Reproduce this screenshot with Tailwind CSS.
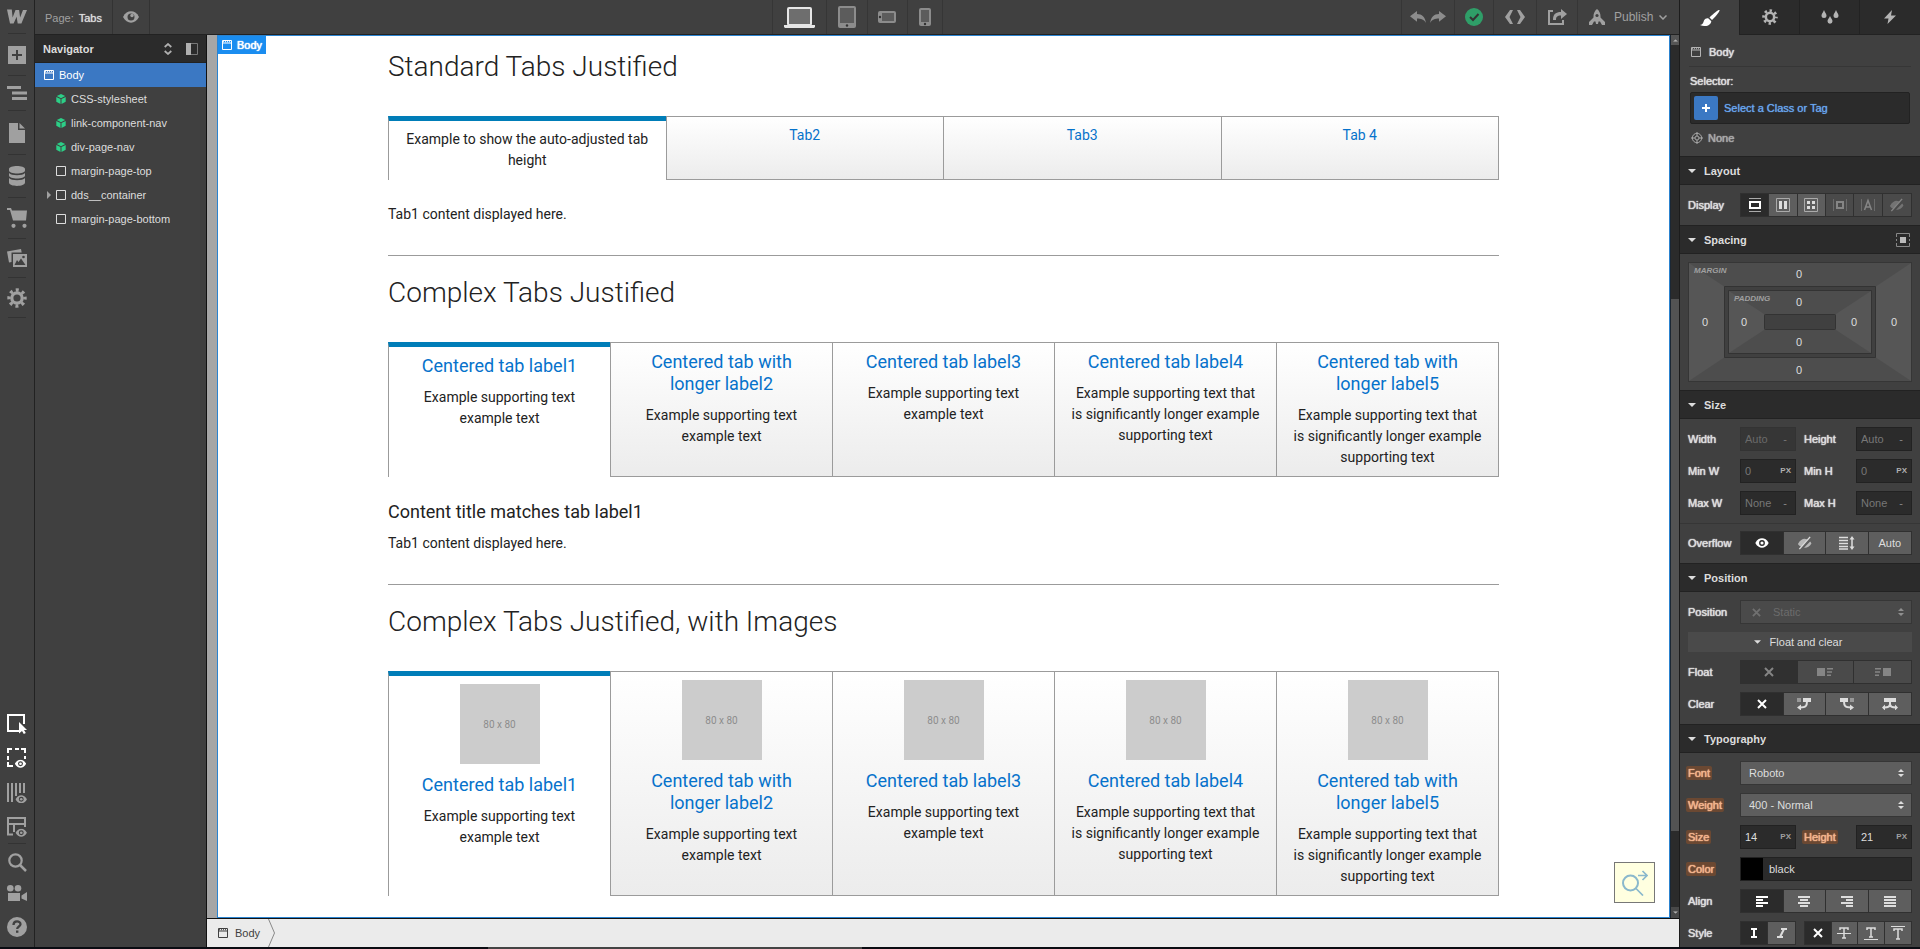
<!DOCTYPE html>
<html lang="en">
<head>
<meta charset="utf-8">
<title>Page: Tabs</title>
<script src="https://cdn.jsdelivr.net/npm/@tailwindcss/browser@4"></script>
</head>
<body class="h-screen overflow-hidden flex flex-col bg-[#404040] font-['Liberation_Sans',Arial,sans-serif] text-[11px] leading-4 text-[#dddddd]">

<svg class="hidden" aria-hidden="true">
  <symbol id="win" viewBox="0 0 10 10"><path d="M.5 .5h9v9h-9zM.5 3h9" fill="none" stroke="currentColor"/><path d="M1 1.7h8" stroke="currentColor" stroke-dasharray="1 1"/></symbol>
  <symbol id="cube" viewBox="0 0 10 10"><path d="M5 0l4.2 2.1L5 4.2.8 2.1zM.3 3l4.2 2.1V10L.3 7.7zM9.7 3L5.5 5.1V10l4.2-2.3z" fill="currentColor"/></symbol>
  <symbol id="box" viewBox="0 0 10 10"><path d="M.5 .5h9v9h-9z" fill="none" stroke="currentColor"/></symbol>
  <symbol id="gear" viewBox="0 0 20 20"><g fill="none" stroke="currentColor"><circle cx="10" cy="10" r="5.200" stroke-width="3.200"/><circle cx="10" cy="10" r="8" stroke-width="3.400" stroke-dasharray="3 3.283" stroke-dashoffset="1.500"/></g></symbol>
  <symbol id="eye" viewBox="0 0 16 12"><path d="M0 6C2 2 5 .3 8 .3S14 2 16 6c-2 4-5 5.700-8 5.700S2 10 0 6zm8-3.500a3.500 3.500 0 100 7 3.500 3.500 0 000-7z" fill="currentColor" fill-rule="evenodd"/><circle cx="8" cy="6" r="1.900" fill="currentColor"/></symbol>
  <symbol id="eyeoff" viewBox="0 0 16 14"><path d="M1 8C3 4 6 2.500 8 2.500c1 0 2 .2 3 .8L4.500 11C3 10.200 2 9.500 1 8zM14 5.500c.5.500 1 1.200 1.400 2C13.500 11 11 12 8.500 12h-1z" fill="currentColor" opacity=".7"/><path d="M14 .5L2.500 13.500" stroke="currentColor" stroke-width="1.500"/></symbol>
  <symbol id="x" viewBox="0 0 10 10"><path d="M1 1l8 8M9 1L1 9" stroke="currentColor" stroke-width="2"/></symbol>
  <symbol id="tri" viewBox="0 0 8 4"><path d="M0 0h8L4 4z" fill="currentColor"/></symbol>
  <symbol id="updown" viewBox="0 0 6 8"><path d="M0 3L3 0l3 3zM0 5l3 3 3-3z" fill="currentColor"/></symbol>
</svg>

<div class="flex flex-1 min-h-0">
  <div class="flex flex-col flex-1 min-w-0">
    <div class="flex flex-1 min-h-0">

      <!-- Tool rail -->
      <aside class="w-[35px] shrink-0 border-r border-[#222222] flex flex-col items-center text-[#a0a0a0]" aria-label="Tools">
        <button class="h-[34px] w-[18px] border-b border-[#333333] flex items-center justify-center" aria-label="Home"><svg class="w-5 h-[15px] shrink-0" viewBox="0 0 20 15"><path d="M0 .5h4.800l.8 8L8.500 1h3.600l1 7.500L16 1h4l-5.600 13.500h-3.700L9.600 7.800l-3 6.700H3z" fill="currentColor"/></svg></button>
        <button class="h-[42px] w-[18px] border-b border-[#333333] flex items-center justify-center" aria-label="Add element"><svg class="w-[18px] h-[18px]" viewBox="0 0 18 18"><path d="M0 0h18v18H0z" fill="currentColor"/><path d="M9 4v10M4 9h10" stroke="#404040" stroke-width="2"/></svg></button>
        <button class="h-[35px] w-[18px] border-b border-[#333333] flex items-center justify-center" aria-label="Navigator"><svg class="w-5 h-[14px] shrink-0" viewBox="0 0 20 14"><path d="M0 1.500h14M5 7h15M5 12.500h15" stroke="currentColor" stroke-width="3"/></svg></button>
        <button class="h-[44px] w-[18px] border-b border-[#333333] flex items-center justify-center" aria-label="Pages"><svg class="w-4 h-5" viewBox="0 0 16 20"><path d="M0 0h9v7h7v13H0zM10.500 0L16 5.500h-5.500z" fill="currentColor"/></svg></button>
        <button class="h-[43px] w-[18px] border-b border-[#333333] flex items-center justify-center" aria-label="CMS"><svg class="w-4 h-5" viewBox="0 0 16 20"><path d="M0 3c0-4 16-4 16 0v1.500c0 4-16 4-16 0zM0 7c2 3 14 3 16 0v2.500c0 4-16 4-16 0zM0 12c2 3 14 3 16 0v4.500c0 4.500-16 4.500-16 0z" fill="currentColor"/></svg></button>
        <button class="h-[41px] w-[18px] border-b border-[#333333] flex items-center justify-center" aria-label="Ecommerce"><svg class="w-5 h-5 shrink-0" viewBox="0 0 20 20"><path d="M0 0h4l1 2.500h15l-1 10H6L3 2H0zM5 13.500h14" fill="currentColor"/><circle cx="6.500" cy="17.800" r="2.100" fill="currentColor"/><circle cx="17.500" cy="17.800" r="2.100" fill="currentColor"/></svg></button>
        <button class="h-[39px] w-[18px] border-b border-[#333333] flex items-center justify-center" aria-label="Assets"><svg class="w-5 h-[18px] shrink-0" viewBox="0 0 20 18"><path d="M0 2.500L14 0l.7 3.500H4.500V13L2 13.500z" fill="currentColor"/><path d="M6 5h14v13H6zm1.500 11h11L14 9.500 11.500 13 10 11z" fill="currentColor" fill-rule="evenodd"/><circle cx="16.500" cy="8" r="1.300" fill="#404040"/></svg></button>
        <button class="h-[40px] w-[18px] border-b border-[#333333] flex items-center justify-center" aria-label="Settings"><svg class="w-5 h-5 shrink-0"><use href="#gear"/></svg></button>
        <div class="flex-1"></div>
        <button class="h-[34px] flex items-center text-white" aria-label="Select"><svg class="w-5 h-5" viewBox="0 0 20 20"><path d="M12 17H1V1h16v9" fill="none" stroke="currentColor" stroke-width="2"/><path d="M12 8l8 8h-3l1.800 3-2 1L15 17l-3 2.500z" fill="currentColor"/></svg></button>
        <button class="h-[34px] flex items-center text-white" aria-label="Show borders"><svg class="w-5 h-5" viewBox="0 0 20 20"><path d="M1 5V1h4M8 1h4M14 1h4v4M1 8v4M18 8v3M1 14v4h5" fill="none" stroke="currentColor" stroke-width="2"/><use href="#eye" x="7.500" y="11.500" width="12" height="8.500"/></svg></button>
        <button class="h-[35px] flex items-center" aria-label="Show grid"><svg class="w-[21px] h-5" viewBox="0 0 21 20"><path d="M1 0v19M5 0v19M9 0v13M13 0v10M17 0v10" stroke="currentColor" stroke-width="2"/><use href="#eye" x="8" y="12" width="12.500" height="8.500"/></svg></button>
        <button class="h-[33px] w-5 flex items-center" aria-label="X-ray"><svg class="w-[21px] h-5 shrink-0" viewBox="0 0 21 20"><path d="M6 17.500H1V1h17v9M1 7h17M7 7v8" fill="none" stroke="currentColor" stroke-width="2"/><use href="#eye" x="8" y="11.500" width="12.500" height="8.500"/></svg></button>
        <div class="w-[18px] h-px bg-[#333333]"></div>
        <button class="h-[36px] flex items-center" aria-label="Search"><svg class="w-[19px] h-[19px]" viewBox="0 0 19 19"><circle cx="7.500" cy="7.500" r="6.200" fill="none" stroke="currentColor" stroke-width="2.200"/><path d="M12 12l6 6" stroke="currentColor" stroke-width="2.500"/></svg></button>
        <button class="h-[26px] flex items-center" aria-label="Videos"><svg class="w-5 h-4" viewBox="0 0 20 16"><circle cx="3.300" cy="3.300" r="3.300" fill="currentColor"/><circle cx="11" cy="3.300" r="3.300" fill="currentColor"/><path d="M1 8h12v8H1zM14.500 10.500L20 7v9l-5.500-2.500z" fill="currentColor"/></svg></button>
        <button class="h-[41px] flex items-center" aria-label="Help"><svg class="w-5 h-5" viewBox="0 0 20 20"><circle cx="10" cy="10" r="10" fill="currentColor"/><path d="M6.500 8c0-5 7-4.500 7-.7 0 2.200-3.300 2.300-3.300 4.700" fill="none" stroke="#404040" stroke-width="2.300"/><path d="M9 13.500h2.400v2.300H9z" fill="#404040"/></svg></button>
      </aside>

      <div class="flex flex-col flex-1 min-w-0">
        <!-- Top bar -->
        <header class="h-[35px] shrink-0 flex border-b border-[#222222] text-[12px] text-[#a0a0a0]">
          <div class="flex flex-1">
            <div class="w-[78px] flex items-center gap-[5px] pl-[10px] pt-[2px] border-r border-[#333333] text-[11px] whitespace-nowrap"><span>Page:</span> <span class="text-[#dddddd] [text-shadow:0_0_1px_currentColor]">Tabs</span></div>
            <button class="w-[37px] flex items-center justify-center border-r border-[#333333]" aria-label="Preview"><svg class="w-4 h-3" viewBox="0 0 16 12"><path d="M0 6C2 2 5 .3 8 .3S14 2 16 6c-2 4-5 5.700-8 5.700S2 10 0 6z" fill="currentColor"/><circle cx="8" cy="6" r="3.500" fill="#404040"/><circle cx="9" cy="4.500" r="1.700" fill="currentColor"/></svg></button>
          </div>
          <div class="flex border-l border-[#363636]">
            <button class="w-[54px] flex items-center justify-center border-r border-[#363636] text-[#e6e6e6]" aria-label="Desktop"><svg class="w-[31px] h-[21px]" viewBox="0 0 31 21"><rect x="4" y="1" width="23" height="17" rx="1" fill="#6e6e6e" stroke="currentColor" stroke-width="2"/><path d="M0 18h31v2l-1 1H1l-1-1z" fill="currentColor"/></svg></button>
            <button class="w-[41px] flex items-center justify-center border-r border-[#363636] text-[#8c8c8c]" aria-label="Tablet"><svg class="w-[18px] h-[22px]" viewBox="0 0 18 22"><rect width="18" height="22" rx="2" fill="currentColor"/><path d="M2 2h14v15H2z" fill="#5c5c5c"/><circle cx="9" cy="19.500" r="1.200" fill="#333"/></svg></button>
            <button class="w-[40px] flex items-center justify-center border-r border-[#363636] text-[#8c8c8c]" aria-label="Mobile landscape"><svg class="w-[18px] h-3" viewBox="0 0 18 12"><rect width="18" height="12" rx="2" fill="currentColor"/><path d="M4 2h12v8H4z" fill="#5c5c5c"/><circle cx="2" cy="6" r="1.200" fill="#333"/></svg></button>
            <button class="w-[35px] flex items-center justify-center border-r border-[#363636] text-[#8c8c8c]" aria-label="Mobile portrait"><svg class="w-3 h-[18px]" viewBox="0 0 12 18"><rect width="12" height="18" rx="2" fill="currentColor"/><path d="M2 2h8v12H2z" fill="#5c5c5c"/><circle cx="6" cy="16" r="1.200" fill="#333"/></svg></button>
          </div>
          <div class="flex flex-1 justify-end">
            <div class="w-[54px] flex items-center justify-center gap-1 border-x border-[#363636] text-[#8c8c8c]">
              <button aria-label="Undo"><svg class="w-4 h-3" viewBox="0 0 16 12"><path d="M7 0v3c5 0 8 3 9 9-2-3.500-5-4.500-9-4.500v3.300L0 5.300z" fill="currentColor"/></svg></button>
              <button aria-label="Redo"><svg class="w-4 h-3" viewBox="0 0 16 12"><path d="M9 0v3c-5 0-8 3-9 9 2-3.500 5-4.500 9-4.500v3.300l7-5.500z" fill="currentColor"/></svg></button>
            </div>
            <button class="w-[39px] flex items-center justify-center border-r border-[#363636]" aria-label="Saved"><svg class="w-[18px] h-[18px]" viewBox="0 0 18 18"><circle cx="9" cy="9" r="9" fill="#2f9e68"/><path d="M5 9l3 3 5.500-6" fill="none" stroke="#333" stroke-width="2"/></svg></button>
            <button class="w-[43px] flex items-center justify-center border-r border-[#363636]" aria-label="Export code"><svg class="w-5 h-[14px]" viewBox="0 0 20 14"><path d="M5 0h3L4.500 7 8 14H5L0 7zM15 0h-3l3.500 7-3.500 7h3l5-7z" fill="currentColor"/></svg></button>
            <button class="w-[41px] flex items-center justify-center border-r border-[#363636]" aria-label="Share"><svg class="w-[19px] h-[16px]" viewBox="0 0 19 16"><path d="M5 2H1v13h14v-4" fill="none" stroke="currentColor" stroke-width="2"/><path d="M5 11c0-6 3-8 8-8V0l6 5-6 5V6.500c-4 0-5 1.500-5 4.500z" fill="currentColor"/></svg></button>
            <button class="w-[101px] flex items-center gap-[9px] pl-[11px]"><svg class="w-4 h-4" viewBox="0 0 16 16"><path d="M8 0c2.500 2 3.500 4.500 3.500 7.500v1L16 13v3h-3l-2-3.500H9.500L9 15H7l-.5-2.500H5L3 16H0v-3l4.500-4.500v-1C4.500 4.500 5.500 2 8 0z" fill="currentColor"/><circle cx="8" cy="6.500" r="1.600" fill="#404040"/></svg><span>Publish</span><svg class="w-2 h-[5px] -ml-[3px]" viewBox="0 0 8 5"><path d="M.5 .5L4 4 7.500 .5" fill="none" stroke="currentColor" stroke-width="1.500"/></svg></button>
          </div>
        </header>

        <div class="flex flex-1 min-h-0">
          <!-- Navigator -->
          <nav class="w-[172px] shrink-0 border-r border-[#111111] flex flex-col [text-shadow:0_0_1px_currentColor,0_0_1px_currentColor]" aria-label="Navigator">
            <div class="h-7 bg-[#2b2b2b] border-b border-[#222222] flex items-center pl-2 pr-2 font-bold [text-shadow:none]">
              <h2 class="flex-1">Navigator</h2>
              <svg class="w-2 h-3 mr-[14px] text-[#b0b0b0]" viewBox="0 0 8 12"><path d="M.7 4L4 1l3.300 3M.7 8L4 11l3.300-3" fill="none" stroke="currentColor" stroke-width="1.700"/></svg>
              <svg class="w-3 h-3" viewBox="0 0 12 12"><path d="M0 0h5v12H0z" fill="#b0b0b0"/><path d="M5 .5h6.500v11H5" fill="none" stroke="#777"/></svg>
            </div>
            <button class="h-6 bg-[#3b78c3] flex items-center gap-[5px] pl-[9px] text-white"><svg class="w-[10px] h-[10px]"><use href="#win"/></svg>Body</button>
            <button class="h-6 flex items-center gap-[5px] pl-[21px]"><svg class="w-[10px] h-[10px] text-[#2ccf87]"><use href="#cube"/></svg>CSS-stylesheet</button>
            <button class="h-6 flex items-center gap-[5px] pl-[21px]"><svg class="w-[10px] h-[10px] text-[#2ccf87]"><use href="#cube"/></svg>link-component-nav</button>
            <button class="h-6 flex items-center gap-[5px] pl-[21px]"><svg class="w-[10px] h-[10px] text-[#2ccf87]"><use href="#cube"/></svg>div-page-nav</button>
            <button class="h-6 flex items-center gap-[5px] pl-[21px]"><svg class="w-[10px] h-[10px]"><use href="#box"/></svg>margin-page-top</button>
            <button class="h-6 flex items-center gap-[5px] pl-3"><svg class="w-1 h-2 text-[#a0a0a0]" viewBox="0 0 4 8"><path d="M0 0l4 4-4 4z" fill="currentColor"/></svg><svg class="w-[10px] h-[10px]"><use href="#box"/></svg>dds__container</button>
            <button class="h-6 flex items-center gap-[5px] pl-[21px]"><svg class="w-[10px] h-[10px]"><use href="#box"/></svg>margin-page-bottom</button>
          </nav>

          <div class="flex flex-col flex-1 min-w-0">
            <div class="flex flex-1 min-h-0 bg-[#a6a6a6] pl-[10px] border-b border-[#111111]">
              <!-- Page canvas -->
              <main class="relative flex-1 min-w-0 overflow-hidden bg-white border border-[#2a83d0] font-['Roboto',sans-serif] text-[14px] leading-[21px] text-[#222222] px-8 pt-3">
                <div class="absolute left-0 top-0 h-[18px] w-12 bg-[#1a8df0] text-white text-[11px] leading-4 font-['Liberation_Sans',Arial,sans-serif] flex items-center gap-[5px] pl-1 [text-shadow:0_0_1px_currentColor,0_0_1px_currentColor]"><svg class="w-[10px] h-[10px]"><use href="#win"/></svg>Body</div>
                <div class="max-w-[1111px] mx-auto">
                  <section>
                    <h2 class="text-[28px] leading-[38px] font-light">Standard Tabs Justified</h2>
                    <div class="mt-[30px] grid grid-cols-4 border-r border-[#9b9b9b]" role="tablist">
                      <button role="tab" aria-selected="true" class="flex flex-col items-center border-l border-l-[#9b9b9b] border-t-[5px] border-t-[#007db8] px-4 pt-2 pb-[9px] text-center">Example to show the auto-adjusted tab height</button>
                      <button role="tab" class="flex flex-col items-center border-y border-l border-[#9b9b9b] bg-linear-to-b from-white to-[#ececec] px-4 py-2 text-[#0672cb]">Tab2</button>
                      <button role="tab" class="flex flex-col items-center border-y border-l border-[#9b9b9b] bg-linear-to-b from-white to-[#ececec] px-4 py-2 text-[#0672cb]">Tab3</button>
                      <button role="tab" class="flex flex-col items-center border-y border-l border-[#9b9b9b] bg-linear-to-b from-white to-[#ececec] px-4 py-2 text-[#0672cb]">Tab 4</button>
                    </div>
                    <p class="mt-6 mb-[30px]">Tab1 content displayed here.</p>
                  </section>
                  <hr class="border-[#9b9b9b]">
                  <section>
                    <h2 class="mt-[18px] text-[28px] leading-[38px] font-light">Complex Tabs Justified</h2>
                    <div class="mt-[30px] grid grid-cols-5 border-r border-[#9b9b9b]" role="tablist">
                      <button role="tab" aria-selected="true" class="flex flex-col items-center gap-[10px] border-l border-l-[#9b9b9b] border-t-[5px] border-t-[#007db8] px-4 pt-2 pb-[9px]"><span class="text-[18px] leading-[22px] text-[#0672cb]">Centered tab label1</span><span class="w-40">Example supporting text example text</span></button>
                      <button role="tab" class="flex flex-col items-center gap-[10px] border-y border-l border-[#9b9b9b] bg-linear-to-b from-white to-[#ececec] px-4 py-2"><span class="text-[18px] leading-[22px] text-[#0672cb] w-40">Centered tab with longer label2</span><span class="w-40">Example supporting text example text</span></button>
                      <button role="tab" class="flex flex-col items-center gap-[10px] border-y border-l border-[#9b9b9b] bg-linear-to-b from-white to-[#ececec] px-4 py-2"><span class="text-[18px] leading-[22px] text-[#0672cb]">Centered tab label3</span><span class="w-40">Example supporting text example text</span></button>
                      <button role="tab" class="flex flex-col items-center gap-[10px] border-y border-l border-[#9b9b9b] bg-linear-to-b from-white to-[#ececec] px-4 py-2"><span class="text-[18px] leading-[22px] text-[#0672cb]">Centered tab label4</span><span>Example supporting text that is significantly longer example supporting text</span></button>
                      <button role="tab" class="flex flex-col items-center gap-[10px] border-y border-l border-[#9b9b9b] bg-linear-to-b from-white to-[#ececec] px-4 py-2"><span class="text-[18px] leading-[22px] text-[#0672cb] w-40">Centered tab with longer label5</span><span>Example supporting text that is significantly longer example supporting text</span></button>
                    </div>
                    <h3 class="mt-6 text-[18px] leading-[22px]">Content title matches tab label1</h3>
                    <p class="mt-[10px] mb-[30px]">Tab1 content displayed here.</p>
                  </section>
                  <hr class="border-[#9b9b9b]">
                  <section>
                    <h2 class="mt-[18px] text-[28px] leading-[38px] font-light">Complex Tabs Justified, with Images</h2>
                    <div class="mt-[30px] grid grid-cols-5 border-r border-[#9b9b9b]" role="tablist">
                      <button role="tab" aria-selected="true" class="flex flex-col items-center gap-[10px] border-l border-l-[#9b9b9b] border-t-[5px] border-t-[#007db8] px-4 pt-2 pb-[9px]"><span class="w-20 h-20 bg-[#cccccc] text-[#8c8c8c] text-[10px] flex items-center justify-center">80 x 80</span><span class="text-[18px] leading-[22px] text-[#0672cb]">Centered tab label1</span><span class="w-40">Example supporting text example text</span></button>
                      <button role="tab" class="flex flex-col items-center gap-[10px] border-y border-l border-[#9b9b9b] bg-linear-to-b from-white to-[#ececec] px-4 py-2"><span class="w-20 h-20 bg-[#cccccc] text-[#8c8c8c] text-[10px] flex items-center justify-center">80 x 80</span><span class="text-[18px] leading-[22px] text-[#0672cb] w-40">Centered tab with longer label2</span><span class="w-40">Example supporting text example text</span></button>
                      <button role="tab" class="flex flex-col items-center gap-[10px] border-y border-l border-[#9b9b9b] bg-linear-to-b from-white to-[#ececec] px-4 py-2"><span class="w-20 h-20 bg-[#cccccc] text-[#8c8c8c] text-[10px] flex items-center justify-center">80 x 80</span><span class="text-[18px] leading-[22px] text-[#0672cb]">Centered tab label3</span><span class="w-40">Example supporting text example text</span></button>
                      <button role="tab" class="flex flex-col items-center gap-[10px] border-y border-l border-[#9b9b9b] bg-linear-to-b from-white to-[#ececec] px-4 py-2"><span class="w-20 h-20 bg-[#cccccc] text-[#8c8c8c] text-[10px] flex items-center justify-center">80 x 80</span><span class="text-[18px] leading-[22px] text-[#0672cb]">Centered tab label4</span><span>Example supporting text that is significantly longer example supporting text</span></button>
                      <button role="tab" class="flex flex-col items-center gap-[10px] border-y border-l border-[#9b9b9b] bg-linear-to-b from-white to-[#ececec] px-4 py-2"><span class="w-20 h-20 bg-[#cccccc] text-[#8c8c8c] text-[10px] flex items-center justify-center">80 x 80</span><span class="text-[18px] leading-[22px] text-[#0672cb] w-40">Centered tab with longer label5</span><span>Example supporting text that is significantly longer example supporting text</span></button>
                    </div>
                  </section>
                </div>
                <button class="absolute right-[14px] bottom-[14px] w-[41px] h-[41px] bg-[#ffffe0] border border-[#777777] flex items-center justify-center" aria-label="Open search"><svg class="w-[26px] h-[26px]" viewBox="0 0 26 26"><g fill="none" stroke="#8ab8cc" stroke-width="2"><circle cx="8.500" cy="13" r="7.500"/><path d="M14 18.500l7 7M16 5.500h9M20.500 1l4.500 4.500-4.500 4.500" stroke-width="1.700"/></g></svg></button>
              </main>
              <!-- Canvas scrollbar -->
              <div class="w-[9px] shrink-0 border-l border-[#1c2733] bg-[#2b2b2b] flex flex-col text-[#b0b0b0]">
                <div class="h-[10px] bg-[#555555] flex items-center justify-center"><svg class="w-[5px] h-[3px] rotate-180" viewBox="0 0 8 4"><use href="#tri" width="8" height="4"/></svg></div>
                <div class="flex-1 flex flex-col"><div class="grow-[254]"></div><div class="grow-[532] bg-[#535353]"></div><div class="grow-[76]"></div></div>
                <div class="h-[11px] bg-[#484848] flex items-center justify-center"><svg class="w-[5px] h-[3px]" viewBox="0 0 8 4"><use href="#tri" width="8" height="4"/></svg></div>
              </div>
            </div>
            <!-- Element breadcrumb -->
            <footer class="h-7 shrink-0 bg-[#ebebeb] text-[#404040] flex items-center pl-[11px] gap-[7px]"><svg class="w-[10px] h-[10px]"><use href="#win"/></svg><a href="#" class="text-[11px]">Body</a><svg class="w-2 h-7 ml-[1px]" viewBox="0 0 8 28"><path d="M.5 0l6 14-6 14" fill="none" stroke="#888"/></svg></footer>
          </div>
        </div>
      </div>
    </div>
  </div>

  <!-- Style panel -->
  <aside class="w-[241px] shrink-0 border-l border-[#1c1c1c] overflow-hidden flex flex-col [text-shadow:0_0_1px_currentColor,0_0_1px_currentColor]" aria-label="Style panel">
    <div class="h-[35px] shrink-0 grid grid-cols-[59px_60px_60px_1fr] text-[#b4b4b4]">
      <button class="flex items-center justify-center text-white" aria-label="Style"><svg class="w-5 h-4" viewBox="0 0 20 16"><path d="M19.500 0c1 1-5 8-7.500 10L9.500 7.500C12 5 18.500-1 19.500 0z" fill="currentColor"/><path d="M8.500 8.500l2.800 2.700C11 15 6 17.500 0 15c3-.5 3-2 4-4.500 1-2 3-2.500 4.500-2z" fill="currentColor"/></svg></button>
      <button class="flex items-center justify-center bg-[#2b2b2b] border-l border-b border-[#222222]" aria-label="Settings"><svg class="w-4 h-4"><use href="#gear"/></svg></button>
      <button class="flex items-center justify-center bg-[#2b2b2b] border-l border-b border-[#222222]" aria-label="Style manager"><svg class="w-[18px] h-[14px]" viewBox="0 0 18 14"><path d="M3 0c1.200 3 2.500 4 2.500 5.500a2.500 2.500 0 01-5 0C.5 4 1.800 3 3 0zM15 0c1.200 3 2.500 4 2.500 5.500a2.500 2.500 0 01-5 0c0-1.500 1.300-2.500 2.500-5.500zM9 6c1.200 2.500 2.500 3.700 2.500 5.200a2.500 2.500 0 01-5 0C6.500 9.700 7.800 8.500 9 6z" fill="currentColor"/></svg></button>
      <button class="flex items-center justify-center bg-[#2b2b2b] border-l border-b border-[#222222]" aria-label="Interactions"><svg class="w-3 h-[14px]" viewBox="0 0 12 14"><path d="M8 0L0 8.500h4.500L3.500 14 12 5.500H7z" fill="currentColor"/></svg></button>
    </div>
    <div class="h-8 shrink-0 mx-[9px] pl-[2px] pt-[2px] flex items-center gap-2 border-b border-[#363636]"><svg class="w-[10px] h-[10px] text-[#b4b4b4]"><use href="#win"/></svg>Body</div>
    <div class="px-[10px] pt-[6px] h-[89px] shrink-0">
      <label for="sel" class="block">Selector:</label>
      <div class="mt-[3px] h-8 bg-[#2b2b2b] border border-[#222222] rounded-xs flex items-center pl-[3px] gap-[6px]">
        <button class="w-6 h-6 bg-[#3b78c3] rounded-xs flex items-center justify-center text-white" aria-label="Add class"><svg class="w-2 h-2" viewBox="0 0 8 8"><path d="M4 0v8M0 4h8" stroke="currentColor" stroke-width="2"/></svg></button>
        <input id="sel" class="flex-1 min-w-0 outline-none placeholder:text-[#68a7f2] placeholder:opacity-100 [text-shadow:0_0_1px_#68a7f2]" placeholder="Select a Class or Tag">
      </div>
      <div class="mt-[6px] flex items-center gap-[5px] text-[#a8a8a8]"><svg class="w-3 h-3 ml-[1px]" viewBox="0 0 12 12"><g fill="none" stroke="currentColor"><circle cx="6" cy="6" r="4.700"/><circle cx="6" cy="6" r="2"/><path d="M6 0v4M6 8v4M0 6h4M8 6h4"/></g></svg>None</div>
    </div>

    <button class="h-[29px] shrink-0 bg-[#2b2b2b] border-y border-[#222222] flex items-center gap-2 pl-2 font-bold [text-shadow:none]"><svg class="w-2 h-1"><use href="#tri"/></svg>Layout</button>
    <div class="p-2 shrink-0 flex items-center">
      <span class="w-[52px]">Display</span>
      <div class="flex-1 h-6 grid grid-cols-6 border border-[#303030] divide-x divide-[#303030]">
        <button class="bg-[#2b2b2b] flex items-center justify-center text-white" aria-label="Block"><svg class="w-3 h-[14px]" viewBox="0 0 12 14"><path d="M0 .5h12M0 13.500h12" stroke="#aaa"/><path d="M1 4h10v6H1z" fill="none" stroke="currentColor" stroke-width="2"/></svg></button>
        <button class="bg-[#5e5e5e] flex items-center justify-center" aria-label="Flex"><svg class="w-[14px] h-[14px]" viewBox="0 0 14 14"><path d="M.5 .5h13v13H.5z" fill="none" stroke="#aaa"/><path d="M3 3h3v8H3zM8 3h3v8H8z" fill="currentColor"/></svg></button>
        <button class="bg-[#5e5e5e] flex items-center justify-center" aria-label="Grid"><svg class="w-[14px] h-[14px]" viewBox="0 0 14 14"><path d="M.5 .5h13v13H.5z" fill="none" stroke="#aaa"/><path d="M3 3h3v3H3zM8 3h3v3H8zM3 8h3v3H3zM8 8h3v3H8z" fill="currentColor"/></svg></button>
        <button class="bg-[#4a4a4a] flex items-center justify-center text-[#858585]" aria-label="Inline block"><svg class="w-[14px] h-[14px]" viewBox="0 0 14 14"><path d="M.5 1v12M13.500 1v12" stroke="#6a6a6a"/><path d="M4 4h6v6H4z" fill="none" stroke="currentColor" stroke-width="2"/></svg></button>
        <button class="bg-[#4a4a4a] flex items-center justify-center text-[#858585]" aria-label="Inline"><svg class="w-[14px] h-[14px]" viewBox="0 0 14 14"><path d="M.5 1v12M13.500 1v12" stroke="#6a6a6a"/><path d="M3.500 12L7 2.500l3.500 9.500M4.800 9h4.400" fill="none" stroke="currentColor" stroke-width="1.500"/></svg></button>
        <button class="bg-[#4a4a4a] flex items-center justify-center text-[#858585]" aria-label="None"><svg class="w-[15px] h-[14px]"><use href="#eyeoff"/></svg></button>
      </div>
    </div>

    <div class="h-[29px] shrink-0 bg-[#2b2b2b] border-y border-[#222222] flex items-center pl-2 pr-[10px] font-bold [text-shadow:none]"><button class="flex flex-1 items-center gap-2"><svg class="w-2 h-1"><use href="#tri"/></svg>Spacing</button><svg class="w-[14px] h-[14px]" viewBox="0 0 14 14"><path d="M.5 4V.5H13.500V4M.5 10v3.500H13.500V10M.5 6v2M13.500 6v2" fill="none" stroke="#888"/><path d="M4 4h6v6H4z" fill="#bbb"/></svg></div>
    <div class="p-2 shrink-0">
      <div class="relative h-[120px] border border-[#363636] flex">
        <svg class="absolute inset-0 w-full h-full" viewBox="0 0 222 118" preserveAspectRatio="none"><path d="M0 0h222v118H0z" fill="#4d4d4d"/><path d="M0 0l36 24v70L0 118zM222 0l-36 24v70l36 24z" fill="#565656"/><path d="M35.500 23.500h151v71h-151z" fill="#404040" stroke="#333"/><path d="M39.500 27.500h143v63h-143z" fill="#4d4d4d" stroke="#333"/><path d="M40 28l35 23v16L40 90zM182 28l-35 23v16l35 23z" fill="#565656"/><rect x="75.500" y="51.500" width="71" height="15" rx="1" fill="#404040" stroke="#333"/></svg>
        <span class="absolute left-[5px] top-0 text-[8px] font-bold italic text-[#a0a0a0] [text-shadow:none]">MARGIN</span>
        <span class="absolute left-[45px] top-[28px] text-[8px] font-bold italic text-[#a0a0a0] [text-shadow:none]">PADDING</span>
        <div class="relative flex-1 grid grid-cols-[32px_46px_64px_46px_1fr] grid-rows-[22px_34px_6px_34px_22px] items-center justify-items-center">
          <button class="col-start-3 row-start-1">0</button>
          <button class="col-start-3 row-start-2">0</button>
          <button class="col-start-1 row-start-3">0</button>
          <button class="col-start-2 row-start-3">0</button>
          <button class="col-start-4 row-start-3">0</button>
          <button class="col-start-5 row-start-3">0</button>
          <button class="col-start-3 row-start-4">0</button>
          <button class="col-start-3 row-start-5">0</button>
        </div>
      </div>
    </div>

    <button class="h-[29px] shrink-0 bg-[#2b2b2b] border-y border-[#222222] flex items-center gap-2 pl-2 font-bold [text-shadow:none]"><svg class="w-2 h-1"><use href="#tri"/></svg>Size</button>
    <div class="p-2 shrink-0 grid grid-cols-[52px_56px_60px_minmax(0,1fr)] gap-y-2 items-center">
      <label for="w">Width</label>
      <div class="h-6 min-w-0 px-1 flex items-center bg-[#363636] border border-[#333333] text-[#777777] [text-shadow:none]"><input id="w" class="flex-1 min-w-0 outline-none placeholder:text-[#6a6a6a]" placeholder="Auto"><span class="px-1">-</span></div>
      <label for="h" class="pl-2">Height</label>
      <div class="h-6 min-w-0 px-1 flex items-center bg-[#2b2b2b] border border-[#222222] text-[#888888] [text-shadow:none]"><input id="h" class="flex-1 min-w-0 outline-none placeholder:text-[#777777]" placeholder="Auto"><span class="px-1">-</span></div>
      <label for="minw">Min W</label>
      <div class="h-6 min-w-0 px-1 flex items-center bg-[#2b2b2b] border border-[#222222] text-[#b0b0b0] [text-shadow:none]"><input id="minw" class="flex-1 min-w-0 outline-none placeholder:text-[#777777]" placeholder="0"><span class="text-[8px] font-bold">PX</span></div>
      <label for="minh" class="pl-2">Min H</label>
      <div class="h-6 min-w-0 px-1 flex items-center bg-[#2b2b2b] border border-[#222222] text-[#b0b0b0] [text-shadow:none]"><input id="minh" class="flex-1 min-w-0 outline-none placeholder:text-[#777777]" placeholder="0"><span class="text-[8px] font-bold">PX</span></div>
      <label for="maxw">Max W</label>
      <div class="h-6 min-w-0 px-1 flex items-center bg-[#2b2b2b] border border-[#222222] text-[#888888] [text-shadow:none]"><input id="maxw" class="flex-1 min-w-0 outline-none placeholder:text-[#777777]" placeholder="None"><span class="px-1">-</span></div>
      <label for="maxh" class="pl-2">Max H</label>
      <div class="h-6 min-w-0 px-1 flex items-center bg-[#2b2b2b] border border-[#222222] text-[#888888] [text-shadow:none]"><input id="maxh" class="flex-1 min-w-0 outline-none placeholder:text-[#777777]" placeholder="None"><span class="px-1">-</span></div>
    </div>
    <div class="px-2 pt-[7px] pb-2 shrink-0 flex items-center border-t border-[#363636]">
      <span class="w-[52px]">Overflow</span>
      <div class="flex-1 h-6 grid grid-cols-4 border border-[#303030] divide-x divide-[#303030]">
        <button class="bg-[#2b2b2b] flex items-center justify-center text-white" aria-label="Visible"><svg class="w-[14px] h-[10px]"><use href="#eye"/></svg></button>
        <button class="bg-[#5e5e5e] flex items-center justify-center" aria-label="Hidden"><svg class="w-[15px] h-[14px]"><use href="#eyeoff"/></svg></button>
        <button class="bg-[#5e5e5e] flex items-center justify-center" aria-label="Scroll"><svg class="w-4 h-[14px]" viewBox="0 0 16 14"><path d="M0 1.500h9M0 4.500h9M0 7.500h9M0 10.500h9M0 13h9M13 2v10" stroke="currentColor" stroke-width="1.500"/><path d="M10.500 3.500L13 0l2.500 3.500zM10.500 10.500L13 14l2.500-3.500z" fill="currentColor"/></svg></button>
        <button class="bg-[#5e5e5e]">Auto</button>
      </div>
    </div>

    <button class="h-[29px] shrink-0 bg-[#2b2b2b] border-y border-[#222222] flex items-center gap-2 pl-2 font-bold [text-shadow:none]"><svg class="w-2 h-1"><use href="#tri"/></svg>Position</button>
    <div class="p-2 shrink-0 flex flex-col gap-2">
      <div class="flex items-center">
        <label for="pos" class="w-[52px]">Position</label>
        <div class="relative flex-1 h-6"><select id="pos" class="appearance-none w-full h-6 pl-8 bg-[#4a4a4a] border border-[#363636] text-[#6c6c6c]"><option>Static</option></select><svg class="absolute left-3 top-2 w-[9px] h-[9px] text-[#707070] pointer-events-none"><use href="#x"/></svg><svg class="absolute right-2 top-2 w-[6px] h-2 text-[#909090] pointer-events-none"><use href="#updown"/></svg></div>
      </div>
      <button class="h-5 bg-[#4a4a4a] flex items-center justify-center gap-[9px] pr-1"><svg class="w-[7px] h-1"><use href="#tri"/></svg>Float and clear</button>
      <div class="flex items-center">
        <span class="w-[52px]">Float</span>
        <div class="flex-1 h-6 grid grid-cols-3 border border-[#303030] divide-x divide-[#303030] text-[#858585]">
          <button class="bg-[#303030] flex items-center justify-center" aria-label="No float"><svg class="w-[10px] h-[10px]"><use href="#x"/></svg></button>
          <button class="bg-[#4a4a4a] flex items-center justify-center" aria-label="Float left"><svg class="w-4 h-2" viewBox="0 0 16 8"><path d="M0 0h8v8H0z" fill="currentColor"/><path d="M10 .7h6M10 4h5M10 7.300h4" stroke="currentColor" stroke-width="1.400"/></svg></button>
          <button class="bg-[#4a4a4a] flex items-center justify-center" aria-label="Float right"><svg class="w-4 h-2" viewBox="0 0 16 8"><path d="M8 0h8v8H8z" fill="currentColor"/><path d="M0 .7h6M0 4h5M0 7.300h4" stroke="currentColor" stroke-width="1.400"/></svg></button>
        </div>
      </div>
      <div class="flex items-center">
        <span class="w-[52px]">Clear</span>
        <div class="flex-1 h-6 grid grid-cols-4 border border-[#303030] divide-x divide-[#303030]">
          <button class="bg-[#2b2b2b] flex items-center justify-center text-white" aria-label="No clear"><svg class="w-[10px] h-[10px]"><use href="#x"/></svg></button>
          <button class="bg-[#5e5e5e] flex items-center justify-center" aria-label="Clear left"><svg class="w-[14px] h-3" viewBox="0 0 14 12"><path d="M0 0h4v4H0z" fill="#999"/><path d="M6 0h8v4H6zM0 9.500L4 6.500v6z" fill="currentColor"/><path d="M10 3c0 5-1 6.500-7 6.500" fill="none" stroke="currentColor" stroke-width="2"/></svg></button>
          <button class="bg-[#5e5e5e] flex items-center justify-center" aria-label="Clear right"><svg class="w-[14px] h-3" viewBox="0 0 14 12"><path d="M10 0h4v4h-4z" fill="#999"/><path d="M0 0h8v4H0zM14 9.500L10 6.500v6z" fill="currentColor"/><path d="M4 3c0 5 1 6.500 7 6.500" fill="none" stroke="currentColor" stroke-width="2"/></svg></button>
          <button class="bg-[#5e5e5e] flex items-center justify-center" aria-label="Clear both"><svg class="w-4 h-3" viewBox="0 0 16 12"><path d="M2 0h12v4H2zM0 9.500L3 6.500v6zM16 9.500L13 6.500v6z" fill="currentColor"/><path d="M8 4v2c0 2.500-2 3.500-6 3.500M8 6c0 2.500 2 3.500 6 3.500" fill="none" stroke="currentColor" stroke-width="2"/></svg></button>
        </div>
      </div>
    </div>

    <button class="h-[29px] shrink-0 bg-[#2b2b2b] border-y border-[#222222] flex items-center gap-2 pl-2 font-bold [text-shadow:none]"><svg class="w-2 h-1"><use href="#tri"/></svg>Typography</button>
    <div class="p-2 pb-0 shrink-0 flex flex-col gap-2">
      <div class="flex items-center">
        <div class="w-[52px]"><label for="font" class="bg-[#6b4832] text-[#f3b48c] rounded-xs -ml-[2px] px-[2px] py-px">Font</label></div>
        <div class="relative flex-1 h-6"><select id="font" class="appearance-none w-full h-6 pl-2 bg-[#5e5e5e] border border-[#363636]"><option>Roboto</option></select><svg class="absolute right-2 top-2 w-[6px] h-2 pointer-events-none"><use href="#updown"/></svg></div>
      </div>
      <div class="flex items-center">
        <div class="w-[52px]"><label for="weight" class="bg-[#6b4832] text-[#f3b48c] rounded-xs -ml-[2px] px-[2px] py-px">Weight</label></div>
        <div class="relative flex-1 h-6"><select id="weight" class="appearance-none w-full h-6 pl-2 bg-[#5e5e5e] border border-[#363636]"><option>400 - Normal</option></select><svg class="absolute right-2 top-2 w-[6px] h-2 pointer-events-none"><use href="#updown"/></svg></div>
      </div>
      <div class="grid grid-cols-[52px_56px_60px_minmax(0,1fr)] items-center">
        <div><label for="fs" class="bg-[#6b4832] text-[#f3b48c] rounded-xs -ml-[2px] px-[2px] py-px">Size</label></div>
        <div class="h-6 min-w-0 px-1 flex items-center bg-[#2b2b2b] border border-[#222222]"><input id="fs" class="flex-1 min-w-0 outline-none" value="14"><span class="text-[8px] font-bold text-[#a0a0a0] [text-shadow:none]">PX</span></div>
        <div class="pl-2"><label for="lh" class="bg-[#6b4832] text-[#f3b48c] rounded-xs -ml-[2px] px-[2px] py-px">Height</label></div>
        <div class="h-6 min-w-0 px-1 flex items-center bg-[#2b2b2b] border border-[#222222]"><input id="lh" class="flex-1 min-w-0 outline-none" value="21"><span class="text-[8px] font-bold text-[#a0a0a0] [text-shadow:none]">PX</span></div>
      </div>
      <div class="flex items-center">
        <div class="w-[52px]"><label for="color" class="bg-[#6b4832] text-[#f3b48c] rounded-xs -ml-[2px] px-[2px] py-px">Color</label></div>
        <div class="flex-1 h-6 flex items-center gap-[6px] bg-[#2b2b2b] border border-[#222222]"><span class="w-[22px] h-full bg-black"></span><input id="color" class="flex-1 min-w-0 outline-none" value="black"></div>
      </div>
      <div class="flex items-center">
        <span class="w-[52px]">Align</span>
        <div class="flex-1 h-6 grid grid-cols-4 border border-[#303030] divide-x divide-[#303030]">
          <button class="bg-[#2b2b2b] flex items-center justify-center text-white" aria-label="Left"><svg class="w-3 h-[11px]" viewBox="0 0 12 11"><path d="M0 1h12M0 4h7M0 7h12M0 10h7" stroke="currentColor" stroke-width="2"/></svg></button>
          <button class="bg-[#5e5e5e] flex items-center justify-center" aria-label="Center"><svg class="w-3 h-[11px]" viewBox="0 0 12 11"><path d="M0 1h12M2 4h8M0 7h12M2 10h8" stroke="currentColor" stroke-width="2"/></svg></button>
          <button class="bg-[#5e5e5e] flex items-center justify-center" aria-label="Right"><svg class="w-3 h-[11px]" viewBox="0 0 12 11"><path d="M0 1h12M5 4h7M0 7h12M5 10h7" stroke="currentColor" stroke-width="2"/></svg></button>
          <button class="bg-[#5e5e5e] flex items-center justify-center" aria-label="Justify"><svg class="w-3 h-[11px]" viewBox="0 0 12 11"><path d="M0 1h12M0 4h12M0 7h12M0 10h12" stroke="currentColor" stroke-width="2"/></svg></button>
        </div>
      </div>
      <div class="grid grid-cols-[52px_56px_1fr] items-center">
        <span>Style</span>
        <div class="h-6 grid grid-cols-2 border border-[#303030] divide-x divide-[#303030]">
          <button class="bg-[#2b2b2b] flex items-center justify-center text-white" aria-label="Regular"><svg class="w-2 h-[10px]" viewBox="0 0 8 10"><path d="M1 1h6M1 9h6M4 1v8" stroke="currentColor" stroke-width="2"/></svg></button>
          <button class="bg-[#5e5e5e] flex items-center justify-center" aria-label="Italic"><svg class="w-[10px] h-[10px]" viewBox="0 0 10 10"><path d="M4 1h6M0 9h6M7 1L3 9" stroke="currentColor" stroke-width="2"/></svg></button>
        </div>
        <div class="ml-2 h-6 grid grid-cols-4 border border-[#303030] divide-x divide-[#303030]">
          <button class="bg-[#2b2b2b] flex items-center justify-center text-white" aria-label="No decoration"><svg class="w-[10px] h-[10px]"><use href="#x"/></svg></button>
          <button class="bg-[#5e5e5e] flex items-center justify-center" aria-label="Strikethrough"><svg class="w-[14px] h-[14px]" viewBox="0 0 14 14"><path d="M3 4V2h8v2M7 2v10M5 12h4" fill="none" stroke="currentColor" stroke-width="1.500"/><path d="M0 7.500h14" stroke="currentColor"/></svg></button>
          <button class="bg-[#5e5e5e] flex items-center justify-center" aria-label="Underline"><svg class="w-[14px] h-[14px]" viewBox="0 0 14 14"><path d="M3 4V2h8v2M7 2v9M5 11h4" fill="none" stroke="currentColor" stroke-width="1.500"/><path d="M0 13.500h14" stroke="currentColor"/></svg></button>
          <button class="bg-[#5e5e5e] flex items-center justify-center" aria-label="Overline"><svg class="w-[14px] h-[14px]" viewBox="0 0 14 14"><path d="M3 5V3h8v2M7 3v10M5 13h4" fill="none" stroke="currentColor" stroke-width="1.500"/><path d="M0 .5h14" stroke="currentColor"/></svg></button>
        </div>
      </div>
    </div>
  </aside>
</div>

<!-- Window edge -->
<div class="h-[2px] shrink-0 bg-[#0a0c12] flex"><div class="grow-[488]"></div><div class="grow-[374] bg-[#444444]"></div><div class="grow-[1058]"></div></div>
</body>
</html>
